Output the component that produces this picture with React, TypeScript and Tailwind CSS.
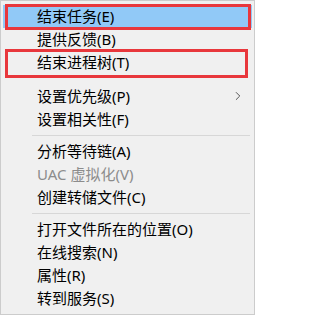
import { ChevronRight } from 'lucide-react';

type Entry =
  | { kind: 'item'; label: string; active?: boolean; disabled?: boolean; submenu?: boolean }
  | { kind: 'sep' }
  | { kind: 'gap' };

const entries: Entry[] = [
  { kind: 'item', label: '结束任务(E)', active: true },
  { kind: 'item', label: '提供反馈(B)' },
  { kind: 'item', label: '结束进程树(T)' },
  { kind: 'gap' },
  { kind: 'item', label: '设置优先级(P)', submenu: true },
  { kind: 'item', label: '设置相关性(F)' },
  { kind: 'sep' },
  { kind: 'item', label: '分析等待链(A)' },
  { kind: 'item', label: 'UAC 虚拟化(V)', disabled: true },
  { kind: 'item', label: '创建转储文件(C)' },
  { kind: 'sep' },
  { kind: 'item', label: '打开文件所在的位置(O)' },
  { kind: 'item', label: '在线搜索(N)' },
  { kind: 'item', label: '属性(R)' },
  { kind: 'item', label: '转到服务(S)' },
];

export default function App() {
  return (
    <div
      className="relative w-[255px] h-[315px] border border-[#cccccc] bg-[#f0f0f0] px-[2px] pt-[4px] pb-[4px] text-[15px] text-black"
      style={{ fontFamily: '"Noto Sans", "Noto Sans CJK SC", sans-serif' }}
    >
      {entries.map((e, i) => {
        if (e.kind === 'gap') return <div key={i} className="h-[11px]" />;
        if (e.kind === 'sep')
          return (
            <div key={i} className="h-[9px] flex items-center pl-[29px] pr-[2px]">
              <div className="h-px w-full bg-[#d7d7d7]" />
            </div>
          );
        return (
          <div
            key={i}
            className={`relative h-[23px] leading-[23px] pl-[34px] whitespace-nowrap ${
              e.active ? 'bg-[#91c9f7]' : ''
            } ${e.disabled ? 'text-[#8c8c8c]' : ''}`}
          >
            {e.label}
            {e.submenu && (
              <ChevronRight
                className="absolute right-[7px] top-[4px] w-[14px] h-[14px] text-[#404040]"
                strokeWidth={1.5}
              />
            )}
          </div>
        );
      })}

      {/* red annotation boxes */}
      <div className="absolute left-[4px] top-[3px] w-[246px] h-[26px] border-[3px] border-[#e8373c]" />
      <div className="absolute left-[4px] top-[48px] w-[243px] h-[29px] border-[3px] border-[#e8373c]" />
    </div>
  );
}
